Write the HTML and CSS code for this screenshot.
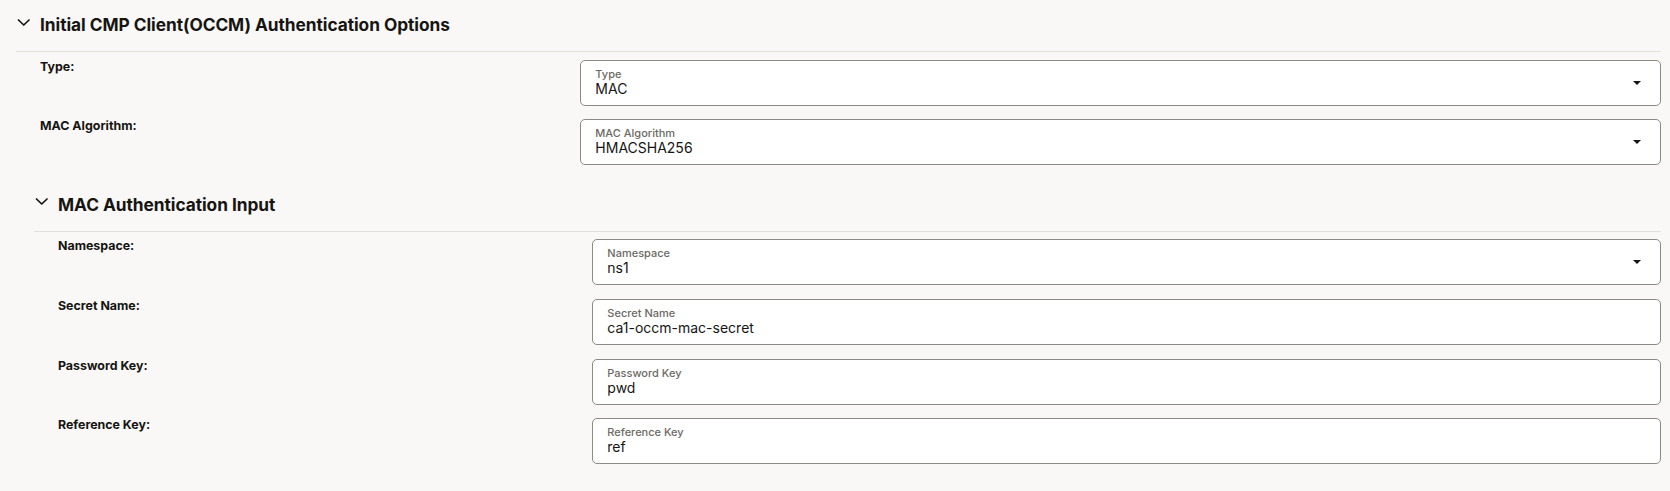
FILE: index.html
```html
<!DOCTYPE html>
<html lang="en">
<head>
<meta charset="utf-8">
<title>Initial CMP Client(OCCM) Authentication Options</title>
<link rel="stylesheet" href="styles.css">
</head>
<body>
<div class="page">
  <section class="section">
    <div class="section-header">
      <svg class="chevron" width="24" height="24" viewBox="0 0 24 24" aria-hidden="true"><path d="M2.5 8 L7.75 13 L13 8" fill="none" stroke="#161513" stroke-width="1.7" stroke-linecap="round" stroke-linejoin="round"/></svg>
      <h2 class="section-title">Initial CMP Client(OCCM) Authentication Options</h2>
    </div>
    <div class="section-body">
      <div class="row">
        <div class="row-label">Type:</div>
        <div class="field select">
          <div class="field-text"><div class="field-label">Type</div><div class="field-value">MAC</div></div>
          <svg class="caret" width="8" height="4" viewBox="0 0 8 4" aria-hidden="true"><path d="M0 0 H8 L4 4 Z" fill="#161513"/></svg>
        </div>
      </div>
      <div class="row">
        <div class="row-label">MAC Algorithm:</div>
        <div class="field select">
          <div class="field-text"><div class="field-label">MAC Algorithm</div><div class="field-value">HMACSHA256</div></div>
          <svg class="caret" width="8" height="4" viewBox="0 0 8 4" aria-hidden="true"><path d="M0 0 H8 L4 4 Z" fill="#161513"/></svg>
        </div>
      </div>

      <section class="section nested">
        <div class="section-header">
          <svg class="chevron" width="24" height="24" viewBox="0 0 24 24" aria-hidden="true"><path d="M2.5 8 L7.75 13 L13 8" fill="none" stroke="#161513" stroke-width="1.7" stroke-linecap="round" stroke-linejoin="round"/></svg>
          <h3 class="section-title">MAC Authentication Input</h3>
        </div>
        <div class="section-body">
          <div class="row">
            <div class="row-label">Namespace:</div>
            <div class="field select">
              <div class="field-text"><div class="field-label">Namespace</div><div class="field-value">ns1</div></div>
              <svg class="caret" width="8" height="4" viewBox="0 0 8 4" aria-hidden="true"><path d="M0 0 H8 L4 4 Z" fill="#161513"/></svg>
            </div>
          </div>
          <div class="row">
            <div class="row-label">Secret Name:</div>
            <div class="field">
              <div class="field-text"><div class="field-label">Secret Name</div><div class="field-value">ca1-occm-mac-secret</div></div>
            </div>
          </div>
          <div class="row">
            <div class="row-label">Password Key:</div>
            <div class="field">
              <div class="field-text"><div class="field-label">Password Key</div><div class="field-value">pwd</div></div>
            </div>
          </div>
          <div class="row">
            <div class="row-label">Reference Key:</div>
            <div class="field">
              <div class="field-text"><div class="field-label">Reference Key</div><div class="field-value">ref</div></div>
            </div>
          </div>
        </div>
      </section>
    </div>
  </section>
</div>
</body>
</html>
```

FILE: styles.css
```css
* { box-sizing: border-box; }

html, body {
  margin: 0;
  padding: 0;
  background: #f9f8f6;
  color: #161513;
  font-family: Inter, "Noto Sans", "Liberation Sans", sans-serif;
}

.page {
  padding: 0 9px 0 16px;
}

.section-header {
  display: flex;
  align-items: center;
  padding: 12px 0 14px 0;
  border-bottom: 1px solid #e2dfdb;
}

.chevron {
  flex: 0 0 24px;
  display: block;
  margin-top: -2px;
}

.section-title {
  margin: 0;
  font-size: 17.3px;
  line-height: 25px;
  font-weight: 700;
  letter-spacing: -0.05px;
}

.section-body {
  display: flex;
  flex-direction: column;
  gap: 13.7px;
  padding-top: 7.5px;
}

.row {
  display: grid;
  grid-template-columns: 1fr 2fr;
  margin-left: 24px;
}

.row-label {
  font-size: 12.4px;
  line-height: 12px;
  font-weight: 700;
  padding-top: 1px;
}

.field {
  display: flex;
  align-items: center;
  height: 46px;
  background: #ffffff;
  border: 1px solid #8d8a86;
  border-radius: 5px;
  padding: 0 19px 0 14px;
}

.field-text {
  flex: 1;
  align-self: flex-start;
  padding-top: 7px;
}

.field-label {
  font-size: 11px;
  line-height: 12px;
  font-weight: 500;
  color: #6c6964;
}

.field-value {
  margin-top: 1px;
  font-size: 14px;
  line-height: 16px;
  font-weight: 400;
}

.caret {
  display: block;
  flex: 0 0 8px;
}

.nested {
  margin-left: 18px;
  margin-top: 1px;
}
```
